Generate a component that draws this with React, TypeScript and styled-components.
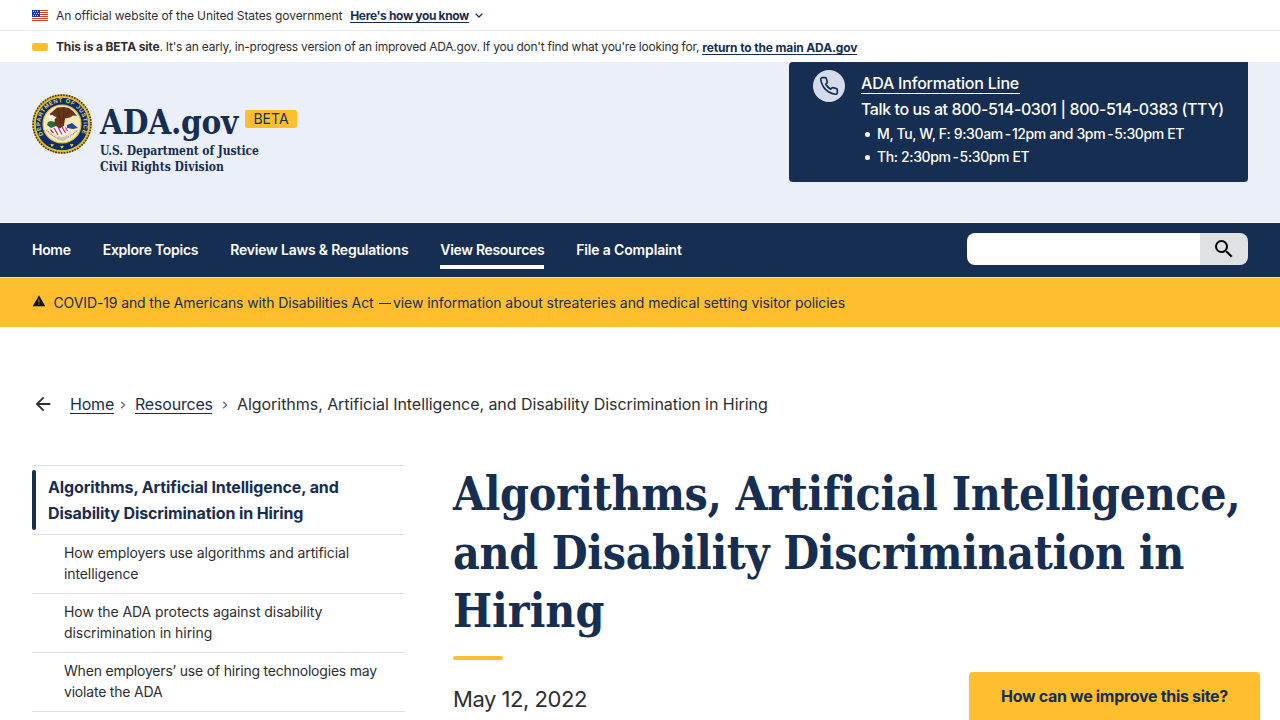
import React from "react";
import styled, { createGlobalStyle } from "styled-components";

const navy = "#162e51";
const gold = "#ffbe2e";
const ink = "#2d2e2f";
const pale = "#ebeff8";
const rule = "#dfe1e2";
const serif = `"DejaVu Serif Condensed", "DejaVu Serif", serif`;

const GlobalStyle = createGlobalStyle`
  * { box-sizing: border-box; }
  body { margin: 0; background: #fff; color: ${ink}; font-family: Inter, "Liberation Sans", sans-serif; }
  a { color: inherit; text-decoration: none; }
  ul { list-style: none; margin: 0; padding: 0; }
`;

const Page = styled.div`
  height: 100vh;
  overflow: hidden;
`;

const T = styled.span<{ $ls?: number }>`
  letter-spacing: ${(p) => p.$ls ?? 0}px;
  white-space: nowrap;
`;

const Strip = styled.div<{ $line?: boolean }>`
  height: 31px;
  padding: 1px 32px 0;
  display: flex;
  align-items: center;
  font-size: 12px;
  line-height: 16px;
  border-bottom: ${(p) => (p.$line ? "1px solid #e7f0f8" : "0")};
`;

const Flag = styled.svg`
  width: 16px;
  height: 11px;
  margin-right: 8px;
`;

const BetaChip = styled.span`
  width: 16px;
  height: 8px;
  border-radius: 2px;
  background: ${gold};
  margin-right: 8px;
`;

const StripLink = styled.a<{ $ls: number; $gap: number }>`
  margin-left: ${(p) => p.$gap}px;
  height: 15px;
  line-height: 15px;
  color: ${navy};
  font-weight: 700;
  letter-spacing: ${(p) => p.$ls}px;
  white-space: nowrap;
  border-bottom: 1px solid ${navy};
`;

const Chevron = styled.svg`
  width: 8px;
  height: 5px;
  margin-left: 6px;
`;

const Header = styled.header`
  height: 161px;
  padding: 0 32px;
  display: flex;
  justify-content: space-between;
  align-items: flex-start;
  background: ${pale};
  border-bottom: 1px solid #fff;
`;

const Brand = styled.div`
  display: flex;
  padding-top: 32px;
  color: ${navy};
`;

const Seal = styled.svg`
  width: 60px;
  height: 60px;
  margin-right: 8px;
`;

const BrandRow = styled.div`
  display: flex;
  height: 49px;
  align-items: flex-start;
`;

const BrandName = styled.span`
  width: 138px;
  font: 700 33px/40px ${serif};
  letter-spacing: -0.3px;
  padding-top: 9px;
`;

const BrandLine = styled.div<{ $ls: number }>`
  font: 700 12px/16px ${serif};
  letter-spacing: ${(p) => p.$ls}px;
`;

const BetaTag = styled.span`
  width: 52px;
  height: 18px;
  margin: 16px 0 0 7px;
  border-radius: 2px;
  background: ${gold};
  font-size: 14px;
  line-height: 18px;
  text-align: center;
`;

const InfoCard = styled.aside`
  width: 459px;
  height: 120px;
  padding: 8px 24px;
  display: flex;
  gap: 16px;
  border-radius: 4px 0 4px 4px;
  background: ${navy};
  color: #fff;
`;

const PhoneDisc = styled.div`
  width: 32px;
  height: 32px;
  border-radius: 50%;
  background: #d4dcec;
  display: flex;
  align-items: center;
  justify-content: center;
`;

const InfoBody = styled.div`
  font-size: 16px;
  font-weight: 500;
  padding-top: 4px;
`;

const InfoTitle = styled.a`
  display: block;
  width: 158.5px;
  height: 20px;
  line-height: 19px;
  letter-spacing: -0.2px;
  white-space: nowrap;
  border-bottom: 1px solid #fff;
`;

const InfoCall = styled.div`
  margin-top: 2px;
  line-height: 26px;
  letter-spacing: -0.4px;
  white-space: nowrap;
`;

const Hours = styled.li`
  display: flex;
  align-items: center;
  height: 23px;
  font-size: 14px;
  letter-spacing: -0.38px;
  white-space: nowrap;
  &::before {
    content: "";
    width: 5px;
    height: 5px;
    margin: 2px 7px 0 4px;
    border-radius: 50%;
    background: #fff;
  }
`;

const Dash = styled.span`
  margin: 0 1px 0 2px;
`;

const Nav = styled.nav`
  height: 55px;
  padding: 0 32px;
  display: flex;
  align-items: flex-start;
  justify-content: space-between;
  background: ${navy};
  border-bottom: 1px solid ${rule};
`;

const NavList = styled.ul`
  display: flex;
  gap: 32px;
`;

const NavItem = styled.li<{ $w: number; $ls: number; $active?: boolean }>`
  width: ${(p) => p.$w}px;
  height: 46px;
  padding-top: 17px;
  color: #fff;
  font-size: 14px;
  font-weight: 600;
  line-height: 20px;
  letter-spacing: ${(p) => p.$ls}px;
  white-space: nowrap;
  border-bottom: ${(p) => (p.$active ? "4px solid #fff" : "0")};
`;

const Search = styled.div`
  display: flex;
  width: 281px;
  height: 32px;
  margin-top: 10px;
  border-radius: 8px;
  overflow: hidden;
`;

const SearchField = styled.input`
  width: 233px;
  padding: 0 8px;
  border: 0;
  background: #fff;
`;

const SearchButton = styled.button`
  width: 48px;
  padding: 0;
  border: 0;
  background: ${rule};
  display: flex;
  align-items: center;
  justify-content: center;
`;

const Alert = styled.div`
  height: 49px;
  padding-bottom: 1px;
  padding-left: 32px;
  display: flex;
  align-items: center;
  background: ${gold};
  color: ${navy};
  font-size: 14px;
`;

const WarnIcon = styled.svg`
  width: 14px;
  height: 12px;
  margin: 0 7.5px 3px 0;
`;

const AlertDash = styled.span`
  width: 12px;
  height: 1px;
  margin: 3px 1.5px 0 6px;
  background: ${navy};
`;

const Crumbs = styled.div`
  display: flex;
  align-items: center;
  height: 26px;
  margin: 64px 32px 0;
  font-size: 16px;
`;

const CrumbLink = styled.a<{ $w: number; $l?: number }>`
  width: ${(p) => p.$w}px;
  height: 20px;
  margin-left: ${(p) => p.$l ?? 0}px;
  line-height: 21px;
  letter-spacing: -0.2px;
  color: ${navy};
  border-bottom: 1px solid ${navy};
`;

const CrumbSep = styled.svg<{ $l: number; $r: number }>`
  width: 6px;
  height: 8px;
  margin: 2px ${(p) => p.$r}px 0 ${(p) => p.$l}px;
`;

const Main = styled.main`
  display: flex;
  gap: 48px;
  padding: 48px 32px 0;
`;

const SideNav = styled.ul`
  width: 373px;
  flex: none;
`;

const SideTop = styled.li`
  height: 69px;
  padding: 4px 0;
  border-top: 1px solid ${rule};
`;

const SideCurrent = styled.div`
  display: flex;
  gap: 12px;
  color: ${navy};
  font-size: 16px;
  font-weight: 700;
  line-height: 26px;
  letter-spacing: -0.12px;
  &::before {
    content: "";
    width: 4px;
    height: 60px;
    border-radius: 2px;
    background: ${navy};
  }
`;

const SideCurrentText = styled.div`
  padding-top: 4px;
  white-space: nowrap;
`;

const SideItem = styled.li<{ $ls: number }>`
  height: 59px;
  padding: 7px 0 0 32px;
  border-top: 1px solid ${rule};
  font-size: 14px;
  line-height: 21px;
  letter-spacing: ${(p) => p.$ls}px;
  white-space: nowrap;
  &:last-child {
    height: 1px;
    padding: 0;
  }
`;

const Article = styled.article`
  flex: 1;
`;

const Title = styled.h1`
  margin: 0;
  color: ${navy};
  font: 700 46px/58.5px ${serif};
  white-space: nowrap;
`;

const GoldBar = styled.div`
  width: 50px;
  height: 4px;
  margin-top: 15px;
  border-radius: 2px;
  background: ${gold};
`;

const DateLine = styled.p`
  margin: 24px 0 0;
  font-size: 22px;
  line-height: 30px;
  letter-spacing: -0.47px;
`;

const Feedback = styled.button`
  position: fixed;
  right: 20px;
  bottom: 0;
  width: 291px;
  height: 48px;
  padding: 0;
  border: 0;
  border-radius: 4px 4px 0 0;
  background: ${gold};
  color: ${navy};
  font: 700 16px/48px Inter, sans-serif;
  letter-spacing: -0.31px;
`;

const UsFlag = () => (
  <Flag viewBox="0 0 16 11" shapeRendering="crispEdges">
    <rect width="16" height="11" fill="#fff" />
    {[0, 2, 4, 6, 8, 10].map((y) => (
      <rect key={y} y={y} width="16" height="1" fill="#db3e1f" />
    ))}
    <rect width="8" height="7" fill="#1e33b1" />
    {[1, 3, 5].map((y) =>
      [1, 3, 5].map((x) => <rect key={`${x}-${y}`} x={x + (y === 3 ? 1 : 0)} y={y} width="1" height="1" fill="#c9d0f0" />)
    )}
  </Flag>
);

const JusticeSeal = () => (
  <Seal viewBox="0 0 60 60">
    <circle cx="30" cy="30" r="29.7" fill="#e0b52c" />
    <circle cx="30" cy="30" r="28.9" fill="none" stroke="#3f3410" strokeWidth="1.6" strokeDasharray="1.6 1.2" />
    <circle cx="30" cy="30" r="26.8" fill="#0c2d6b" stroke="#f0cc3d" strokeWidth="1" />
    <circle cx="30" cy="30" r="19" fill="#fbe9bd" stroke="#e8bd35" strokeWidth="1.2" />
    <path id="seal-arc" d="M11.3 40.8 A21.6 21.6 0 1 1 48.7 40.8" fill="none" />
    <text fontFamily="Liberation Sans" fontSize="5.8" fontWeight="700" fill="#e9d27a">
      <textPath href="#seal-arc" textLength="88">DEPARTMENT OF JUSTICE</textPath>
    </text>
    <path d="M19 50.2l1 1.6 1.4-1.6M28.8 52l1 1.6 1.4-1.6M38.6 50.2l1 1.6 1.4-1.6" stroke="#f3cf3a" strokeWidth="1.4" fill="none" />
    <path d="M15 31l1-3 3-1 4 1 1 4-5 2z" fill="#27683c" />
    <path d="M35 31l5-2 6 5-5 1-6-1z" fill="#1d4a9c" />
    <path d="M17 36l8-4 8 0 5 4-3 4-8 1.5-8-3z" fill="#fff" />
    <path d="M18.5 35.5l3 3.5M22 34l4 7M26 33l4 7.5M30 33l3.5 6M33.5 33.5l2 3.5" stroke="#c92963" strokeWidth="1.3" />
    <path d="M20 18l5-4.5 7-.5 5 1 4 3 4 5-4-.5-3 2-5 1-1 7-4 3-5-3-.5-7-4-2-.5-3z" fill="#67361b" />
    <path d="M15.5 22l5-1 4 2.500-2.500 2-4-1z" fill="#fff" />
    <path d="M26 15l3 14M32 14l-1 15M37 16l-4 7" stroke="#452211" strokeWidth=".7" />
    <path d="M14.500 36q15 17 31 0" stroke="#8f9098" strokeWidth="1.500" strokeDasharray="1 .9" fill="none" />
    <path d="M26 42l4 1.500 6-2.500-1 4-4 2-5-1z" fill="#c4c4bf" />
  </Seal>
);

const Sep = ({ l, r }: { l: number; r: number }) => (
  <CrumbSep $l={l} $r={r} viewBox="0 0 6 8">
    <path d="M1.2 0.7L4.6 4L1.2 7.3" fill="none" stroke="#71767a" strokeWidth="1.4" />
  </CrumbSep>
);

export default function App() {
  return (
    <Page>
      <GlobalStyle />
      <Strip $line>
        <UsFlag />
        <T $ls={-0.1}>An official website of the United States government</T>
        <StripLink $ls={-0.35} $gap={8}>Here's how you know</StripLink>
        <Chevron viewBox="0 0 8 5">
          <path d="M0.6 0.6L4 4L7.4 0.6" fill="none" stroke={navy} strokeWidth="1.3" />
        </Chevron>
      </Strip>
      <Strip>
        <BetaChip />
        <T $ls={-0.15} as="b">This is a BETA site</T>
        <T $ls={-0.23}>. It's an early, in-progress version of an improved ADA.gov. If you don't find what you're looking for,</T>
        <StripLink $ls={-0.14} $gap={3}>return to the main ADA.gov</StripLink>
      </Strip>
      <Header>
        <Brand>
          <JusticeSeal />
          <div>
            <BrandRow>
              <BrandName>ADA.gov</BrandName>
              <BetaTag>BETA</BetaTag>
            </BrandRow>
            <BrandLine $ls={-0.06}>U.S. Department of Justice</BrandLine>
            <BrandLine $ls={0.03}>Civil Rights Division</BrandLine>
          </div>
        </Brand>
        <InfoCard>
          <PhoneDisc>
            <svg width="20" height="20" viewBox="0 0 24 24" fill="none" stroke={navy} strokeWidth="2" strokeLinejoin="round">
              <path d="M22 16.92v3a2 2 0 0 1-2.18 2 19.79 19.79 0 0 1-8.63-3.07 19.5 19.5 0 0 1-6-6 19.79 19.79 0 0 1-3.07-8.67A2 2 0 0 1 4.11 2h3a2 2 0 0 1 2 1.72c.13.96.36 1.9.7 2.81a2 2 0 0 1-.45 2.11L8.09 9.91a16 16 0 0 0 6 6l1.27-1.27a2 2 0 0 1 2.11-.45c.91.34 1.85.57 2.81.7A2 2 0 0 1 22 16.92z" />
            </svg>
          </PhoneDisc>
          <InfoBody>
            <InfoTitle>ADA Information Line</InfoTitle>
            <InfoCall>Talk to us at 800-514-0301 | 800-514-0383 (TTY)</InfoCall>
            <ul>
              <Hours><span>M, Tu, W, F: 9:30am<Dash>-</Dash>12pm and 3pm<Dash>-</Dash>5:30pm ET</span></Hours>
              <Hours><span>Th: 2:30pm<Dash>-</Dash>5:30pm ET</span></Hours>
            </ul>
          </InfoBody>
        </InfoCard>
      </Header>
      <Nav>
        <NavList>
          <NavItem $w={38.7} $ls={-0.3}>Home</NavItem>
          <NavItem $w={95.6} $ls={-0.27}>Explore Topics</NavItem>
          <NavItem $w={178} $ls={-0.22}>Review Laws &amp; Regulations</NavItem>
          <NavItem $w={104} $ls={-0.32} $active>View Resources</NavItem>
          <NavItem $w={106} $ls={-0.16}>File a Complaint</NavItem>
        </NavList>
        <Search>
          <SearchField aria-label="Search" />
          <SearchButton aria-label="Submit search">
            <svg width="24" height="24" viewBox="0 0 24 24">
              <path d="M15.5 14h-.79l-.28-.27A6.47 6.47 0 0 0 16 9.5 6.5 6.5 0 1 0 9.5 16c1.61 0 3.09-.59 4.23-1.57l.27.28v.79l5 4.99L20.49 19l-4.99-5zm-6 0C7.01 14 5 11.99 5 9.5S7.01 5 9.5 5 14 7.01 14 9.5 11.99 14 9.5 14z" />
            </svg>
          </SearchButton>
        </Search>
      </Nav>
      <Alert>
        <WarnIcon viewBox="0 0 14 12">
          <path d="M7 0.3L13.3 11.2H0.7Z" fill="#111" />
          <path d="M6.4 4.4h1.2v3H6.4zM6.4 8.4h1.2v1.2H6.4z" fill={gold} opacity=".65" />
        </WarnIcon>
        <T $ls={-0.12}>COVID-19 and the Americans with Disabilities Act</T>
        <AlertDash />
        <T $ls={-0.07}>view information about streateries and medical setting visitor policies</T>
      </Alert>
      <Crumbs>
        <svg width="22" height="22" viewBox="0 0 24 24" fill={ink}>
          <path d="M20 11H7.83l5.59-5.59L12 4l-8 8 8 8 1.41-1.41L7.83 13H20v-2z" />
        </svg>
        <CrumbLink $w={44} $l={16}>Home</CrumbLink>
        <Sep l={6} r={9} />
        <CrumbLink $w={77}>Resources</CrumbLink>
        <Sep l={10} r={9} />
        <T $ls={-0.05}>Algorithms, Artificial Intelligence, and Disability Discrimination in Hiring</T>
      </Crumbs>
      <Main>
        <SideNav>
          <SideTop>
            <SideCurrent>
              <SideCurrentText>
                Algorithms, Artificial Intelligence, and
                <br />
                Disability Discrimination in Hiring
              </SideCurrentText>
            </SideCurrent>
          </SideTop>
          <SideItem $ls={-0.1}>How employers use algorithms and artificial<br />intelligence</SideItem>
          <SideItem $ls={-0.06}>How the ADA protects against disability<br />discrimination in hiring</SideItem>
          <SideItem $ls={-0.2}>When employers’ use of hiring technologies may<br />violate the ADA</SideItem>
          <SideItem $ls={0} />
        </SideNav>
        <Article>
          <Title>
            <T $ls={-0.37}>Algorithms, Artificial Intelligence,</T>
            <br />
            <T $ls={-0.36}>and Disability Discrimination in</T>
            <br />
            <T>Hiring</T>
          </Title>
          <GoldBar />
          <DateLine>May 12, 2022</DateLine>
        </Article>
      </Main>
      <Feedback>How can we improve this site?</Feedback>
    </Page>
  );
}
